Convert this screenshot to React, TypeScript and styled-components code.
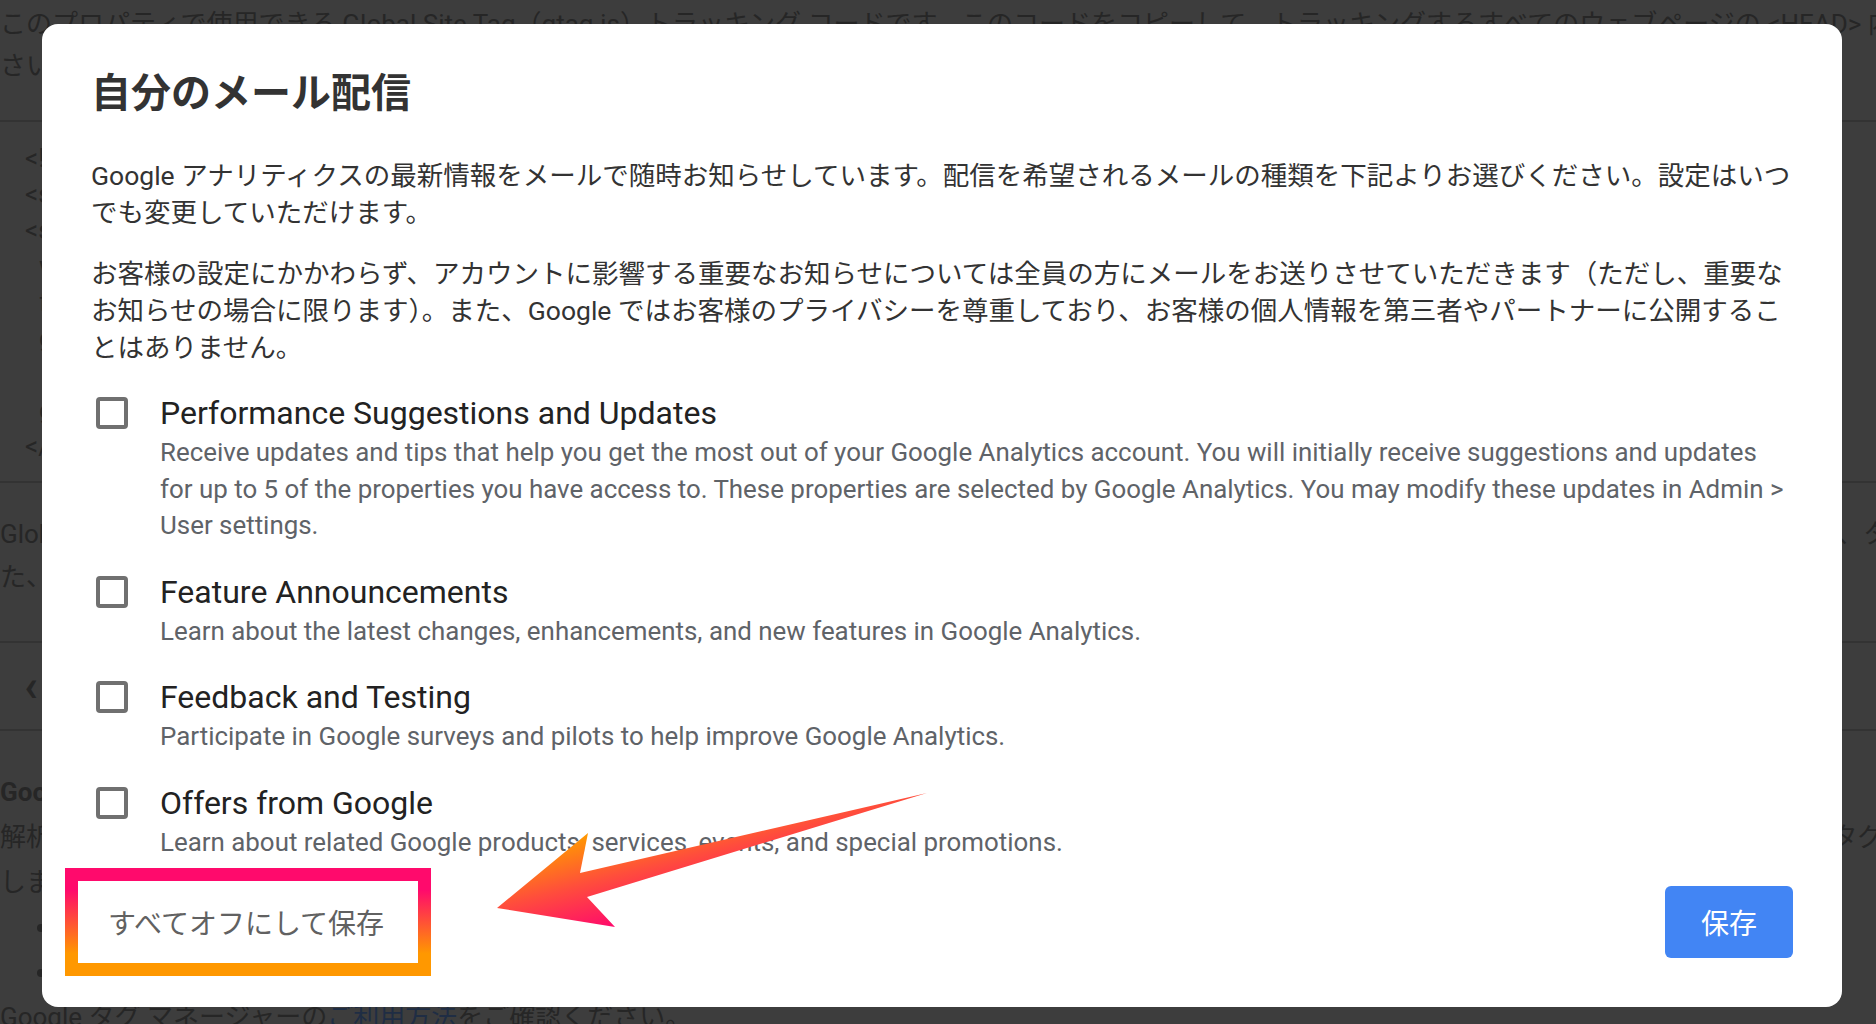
import React from 'react'
import styled, { createGlobalStyle } from 'styled-components'

const GlobalStyle = createGlobalStyle`
    html, body {
        margin: 0;
        padding: 0;
        overflow: hidden;
        background: #3d3d3d;
    }
    * {
        box-sizing: border-box;
    }
`

const options = [
    {
        title: 'Performance Suggestions and Updates',
        text: 'Receive updates and tips that help you get the most out of your Google Analytics account. You will initially receive suggestions and updates for up to 5 of the properties you have access to. These properties are selected by Google Analytics. You may modify these updates in Admin > User settings.',
    },
    {
        title: 'Feature Announcements',
        text: 'Learn about the latest changes, enhancements, and new features in Google Analytics.',
    },
    {
        title: 'Feedback and Testing',
        text: 'Participate in Google surveys and pilots to help improve Google Analytics.',
    },
    {
        title: 'Offers from Google',
        text: 'Learn about related Google products, services, events, and special promotions.',
    },
]

const codeLines = [
    { text: '<!-- Global site tag (gtag.js) - Google Analytics -->', indent: false },
    { text: '<script async src="https://www.googletagmanager.com/gtag/js?id=UA-123456789-1"></script>', indent: false },
    { text: '<script>', indent: false },
    { text: 'window.dataLayer = window.dataLayer || [];', indent: true },
    { text: 'function gtag(){dataLayer.push(arguments);}', indent: true },
    { text: "gtag('js', new Date());", indent: true },
    { text: '', indent: true },
    { text: "gtag('config', 'UA-123456789-1');", indent: true },
    { text: '</script>', indent: false },
]

export default function App() {
    return (
        <>
            <GlobalStyle />
            <Page>
                <Intro>
                    <Line>このプロパティで使用できる Global Site Tag（gtag.js）トラッキング コードです。このコードをコピーして、トラッキングするすべてのウェブページの &lt;HEAD&gt; 内に最初の項目として貼り付けてくだ</Line>
                    <Line>さい。</Line>
                </Intro>
                <CodeBox>
                    {codeLines.map((l, i) => (
                        <CodeLine key={i} $indent={l.indent}>{l.text || '\u00a0'}</CodeLine>
                    ))}
                </CodeBox>
                <Section $top={30} $bottom={42} $lh={43}>
                    <Line>Global Site Tag を使用すると、Google アナリティクスのデータを取得して Google の各種サービスへ送信できます。すでにサイトでタグを使用している場合は、タグにこの設定を追加してくださ</Line>
                    <Line>た、</Line>
                </Section>
                <BackRow>‹</BackRow>
                <Section $top={39} $bottom={0} $lh={45}>
                    <Heading>Google タグ マネージャー</Heading>
                    <Line>解析タグやマーケティング タグの管理には Google タグ マネージャーをおすすめします。Google タグ マネージャーを使用すると、ウェブサイトのタグを一括タグ管理でき、タグの追加や更新を簡単に行うことができます。</Line>
                    <Line>します。</Line>
                    <Bullets>
                        <li>サイトのコードを変更せずにタグを追加できます</li>
                        <li>タグの配信を柔軟に管理できます</li>
                    </Bullets>
                    <Line>Google タグ マネージャーの<PageLink>ご利用方法</PageLink>をご確認ください。</Line>
                </Section>
            </Page>

            <Backdrop>
                <Dialog>
                    <DialogTitle>自分のメール配信</DialogTitle>
                    <Paragraph>Google アナリティクスの最新情報をメールで随時お知らせしています。配信を希望されるメールの種類を下記よりお選びください。設定はいつでも変更していただけます。</Paragraph>
                    <Paragraph>お客様の設定にかかわらず、アカウントに影響する重要なお知らせについては全員の方にメールをお送りさせていただきます（ただし、重要なお知らせの場合に限ります）。また、Google ではお客様のプライバシーを尊重しており、お客様の個人情報を第三者やパートナーに公開することはありません。</Paragraph>
                    <OptionList>
                        {options.map((o) => (
                            <Option key={o.title}>
                                <Checkbox type="checkbox" />
                                <div>
                                    <OptionTitle>{o.title}</OptionTitle>
                                    <OptionText>{o.text}</OptionText>
                                </div>
                            </Option>
                        ))}
                    </OptionList>
                    <Footer>
                        <OffButton>
                            すべてオフにして保存
                            <Highlight />
                        </OffButton>
                        <SaveButton>保存</SaveButton>
                    </Footer>
                    <Arrow width="460" height="160" viewBox="0 0 460 160">
                        <defs>
                            <linearGradient id="arrowFill" gradientUnits="userSpaceOnUse" x1="106" y1="49" x2="131" y2="143">
                                <stop offset="0" stopColor="#ff9a00" />
                                <stop offset="0.5" stopColor="#ff4d3c" />
                                <stop offset="1" stopColor="#ff0a6c" />
                            </linearGradient>
                        </defs>
                        <path d="M445 9 L98 89 L106 49 L15 124 L133 143 L105 113 Z" fill="url(#arrowFill)" />
                    </Arrow>
                </Dialog>
            </Backdrop>
        </>
    )
}

const Page = styled.div`
    width: 100%;
    height: 1024px;
    overflow: hidden;
    background: #3d3d3d;
    color: #262626;
    font-family: Roboto, "Noto Sans CJK JP", sans-serif;
    font-size: 26px;
    line-height: 42px;
`

const Line = styled.div`
    white-space: nowrap;
`

const Intro = styled.div`
    padding: 3px 0 33px;
    border-bottom: 2px solid #333;
`

const CodeBox = styled.div`
    padding: 18px 0 17px 25px;
    line-height: 36px;
    border-bottom: 2px solid #333;
`

const CodeLine = styled.div<{ $indent: boolean }>`
    white-space: pre;
    padding-left: ${(p) => (p.$indent ? '14px' : '0')};
`

const Section = styled.div<{ $top: number; $bottom: number; $lh: number }>`
    padding: ${(p) => p.$top}px 0 ${(p) => p.$bottom}px;
    line-height: ${(p) => p.$lh}px;
    border-bottom: 2px solid #333;
    &:last-child {
        border-bottom: none;
    }
`

const BackRow = styled.div`
    height: 88px;
    display: flex;
    align-items: center;
    padding-left: 24px;
    font-size: 44px;
    font-weight: 700;
    border-bottom: 2px solid #333;
`

const Heading = styled.div`
    font-weight: 700;
    white-space: nowrap;
`

const Bullets = styled.ul`
    margin: 0;
    padding-left: 60px;
`

const PageLink = styled.span`
    color: #1f2d44;
`

const Backdrop = styled.div`
    position: fixed;
    inset: 0;
    display: flex;
    align-items: flex-start;
    padding: 24px 34px 0 42px;
`

const Dialog = styled.div`
    position: relative;
    flex: 1;
    background: #fff;
    border-radius: 16px;
    padding: 42px 49px 49px;
    font-family: Roboto, "Noto Sans CJK JP", sans-serif;
`

const DialogTitle = styled.h2`
    margin: 0 0 36px;
    font-size: 40px;
    line-height: 56px;
    font-weight: 700;
    color: #333;
`

const Paragraph = styled.p`
    margin: 0 0 25px;
    font-size: 26.5px;
    line-height: 36.7px;
    color: #333;
`

const OptionList = styled.div`
    display: flex;
    flex-direction: column;
    gap: 27px;
    margin-top: 25.5px;
`

const Option = styled.label`
    display: grid;
    grid-template-columns: 32px 1fr;
    column-gap: 32px;
    padding-left: 5px;
`

const Checkbox = styled.input`
    appearance: none;
    margin: 5px 0 0;
    width: 32px;
    height: 32px;
    border: 4px solid #707070;
    border-radius: 4px;
    background: #fff;
`

const OptionTitle = styled.div`
    font-size: 32px;
    line-height: 42px;
    color: #222;
`

const OptionText = styled.div`
    font-size: 25.9px;
    line-height: 36.5px;
    color: #5f6368;
`

const Footer = styled.div`
    display: flex;
    justify-content: space-between;
    align-items: center;
    margin-top: 26px;
`

const OffButton = styled.button`
    position: relative;
    height: 72px;
    padding: 0 17px;
    border: none;
    background: none;
    font-family: inherit;
    font-size: 28px;
    color: #616161;
`

const Highlight = styled.span`
    position: absolute;
    top: -18px;
    bottom: -18px;
    left: -26px;
    right: -30px;
    border: 13px solid;
    border-image: linear-gradient(to bottom, #ff0a6c 0%, #ff0a6c 12%, #ff9800 88%) 1;
    pointer-events: none;
`

const SaveButton = styled.button`
    width: 128px;
    height: 72px;
    border: none;
    border-radius: 6px;
    background: #4285f4;
    color: #fff;
    font-family: inherit;
    font-size: 28px;
`

const Arrow = styled.svg`
    position: absolute;
    left: 440px;
    top: 760px;
    pointer-events: none;
`
